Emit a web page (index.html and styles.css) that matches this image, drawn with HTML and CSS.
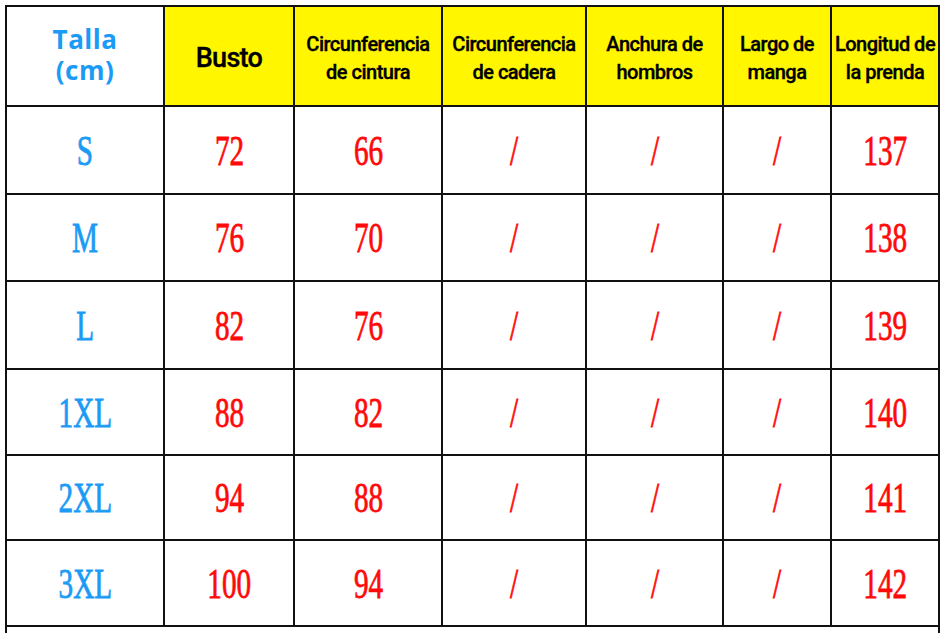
FILE: index.html
```html
<!DOCTYPE html>
<html lang="es">
<head>
<meta charset="utf-8">
<title>Tabla de tallas</title>
<link rel="stylesheet" href="styles.css">
</head>
<body>
<table class="sizes">
  <colgroup>
    <col class="c1"><col class="c2"><col class="c3"><col class="c4"><col class="c5"><col class="c6"><col class="c7">
  </colgroup>
  <thead>
    <tr class="head">
      <th class="size-head"><span class="hl">Talla</span><span class="hl">(cm)</span></th>
      <th class="yellow big">Busto</th>
      <th class="yellow">Circunferencia<br>de cintura</th>
      <th class="yellow">Circunferencia<br>de cadera</th>
      <th class="yellow">Anchura de<br>hombros</th>
      <th class="yellow">Largo de<br>manga</th>
      <th class="yellow">Longitud de<br>la prenda</th>
    </tr>
  </thead>
  <tbody>
    <tr class="r1"><td class="sz"><span class="n">S</span></td><td><span class="n">72</span></td><td><span class="n">66</span></td><td><span class="n">/</span></td><td><span class="n">/</span></td><td><span class="n">/</span></td><td><span class="n">137</span></td></tr>
    <tr class="r2"><td class="sz"><span class="n">M</span></td><td><span class="n">76</span></td><td><span class="n">70</span></td><td><span class="n">/</span></td><td><span class="n">/</span></td><td><span class="n">/</span></td><td><span class="n">138</span></td></tr>
    <tr class="r3"><td class="sz"><span class="n">L</span></td><td><span class="n">82</span></td><td><span class="n">76</span></td><td><span class="n">/</span></td><td><span class="n">/</span></td><td><span class="n">/</span></td><td><span class="n">139</span></td></tr>
    <tr class="r4"><td class="sz"><span class="n">1XL</span></td><td><span class="n">88</span></td><td><span class="n">82</span></td><td><span class="n">/</span></td><td><span class="n">/</span></td><td><span class="n">/</span></td><td><span class="n">140</span></td></tr>
    <tr class="r5"><td class="sz"><span class="n">2XL</span></td><td><span class="n">94</span></td><td><span class="n">88</span></td><td><span class="n">/</span></td><td><span class="n">/</span></td><td><span class="n">/</span></td><td><span class="n">141</span></td></tr>
    <tr class="r6"><td class="sz"><span class="n">3XL</span></td><td><span class="n">100</span></td><td><span class="n">94</span></td><td><span class="n">/</span></td><td><span class="n">/</span></td><td><span class="n">/</span></td><td><span class="n">142</span></td></tr>
    <tr class="tail"><td colspan="7"></td></tr>
  </tbody>
</table>
</body>
</html>
```
FILE: styles.css
```css
html, body {
  margin: 0;
  padding: 0;
  background: #ffffff;
  overflow: hidden;
}
body {
  padding: 5px 0 0 5px;
}
.sizes {
  border-collapse: collapse;
  table-layout: fixed;
  width: 935px;
}
.c1 { width: 158px; }
.c2 { width: 130px; }
.c3 { width: 148px; }
.c4 { width: 144px; }
.c5 { width: 137px; }
.c6 { width: 108px; }
.c7 { width: 108px; }
.sizes th, .sizes td {
  border: 2px solid #111111;
  padding: 0;
  text-align: center;
  vertical-align: middle;
}
.head { height: 100px; }
.r1 { height: 88px; }
.r2 { height: 87px; }
.r3 { height: 88px; }
.r4 { height: 86px; }
.r5 { height: 85px; }
.r6 { height: 86px; }
.tail { height: 40px; }
.sizes th {
  font-family: Roboto, "Liberation Sans", sans-serif;
  font-weight: 500;
  font-size: 20px;
  line-height: 28px;
  letter-spacing: -0.5px;
  color: #000000;
  padding-top: 3px;
  -webkit-text-stroke: 0.35px #000000;
}
.yellow { background: #fff600; }
.sizes th.big {
  font-size: 27px;
  letter-spacing: -0.7px;
  padding-top: 4px;
}
.sizes th.size-head {
  font-family: "Open Sans", "DejaVu Sans", sans-serif;
  font-weight: 700;
  font-size: 26px;
  color: #1b9bf5;
  letter-spacing: 0.5px;
  -webkit-text-stroke: 0;
  padding-bottom: 6px;
}
.hl {
  display: block;
  line-height: 31px;
  height: 31px;
}
.n {
  display: inline-block;
  font-family: "Liberation Serif", serif;
  font-size: 43px;
  line-height: 43px;
  color: #ff0a0a;
  transform: scaleX(0.68);
  -webkit-text-stroke: 0.8px #ff0a0a;
}
.sz .n {
  color: #1b9bf5;
  -webkit-text-stroke: 0.8px #1b9bf5;
}
```
